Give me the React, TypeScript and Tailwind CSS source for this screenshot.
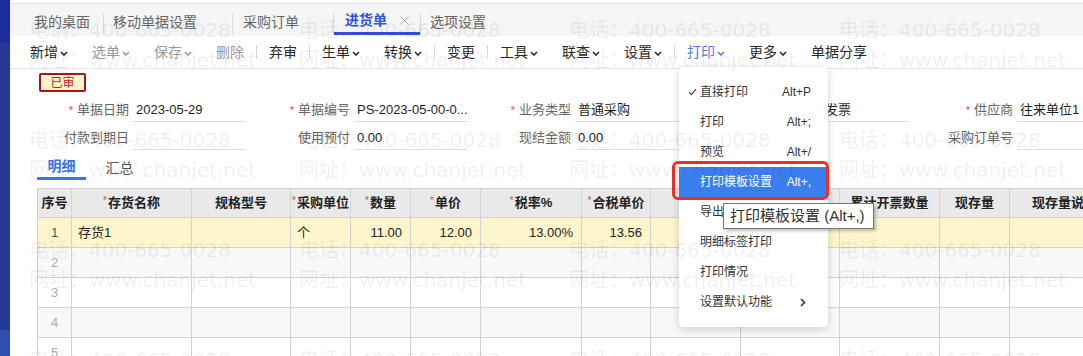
import { Fragment } from 'react';

const tabs = [
  { label: '我的桌面', box: 'w-[93px] pl-[24px]' },
  { label: '移动单据设置', box: 'w-[128px] pl-[9px]' },
  { label: '采购订单', box: 'w-[100px] pl-[10px]' },
  { label: '进货单', box: 'w-[86px] pl-[11px]', active: true },
  { label: '选项设置', box: 'pl-[9px]' },
];

type Tool = { t: string; chev?: boolean; dim?: boolean; blue?: boolean } | 'sep';

const tools: Tool[] = [
  { t: '新增', chev: true },
  { t: '选单', chev: true, dim: true },
  { t: '保存', chev: true, dim: true },
  { t: '删除', dim: true },
  'sep',
  { t: '弃审' },
  'sep',
  { t: '生单', chev: true },
  { t: '转换', chev: true },
  'sep',
  { t: '变更' },
  'sep',
  { t: '工具', chev: true },
  { t: '联查', chev: true },
  { t: '设置', chev: true },
  'sep',
  { t: '打印', chev: true, blue: true },
  { t: '更多', chev: true },
  { t: '单据分享' },
];

type Field = { label?: string; req?: boolean; value?: string; input?: boolean };

const formRows: Field[][] = [
  [
    { label: '单据日期', req: true, value: '2023-05-29', input: true },
    { label: '单据编号', req: true, value: 'PS-2023-05-00-0...', input: true },
    { label: '业务类型', req: true, value: '普通采购', input: true },
    { label: '票据类型', req: true, value: '普通发票', input: true },
    { label: '供应商', req: true, value: '往来单位1', input: true },
  ],
  [
    { label: '付款到期日', input: true },
    { label: '使用预付', value: '0.00', input: true },
    { label: '现结金额', value: '0.00', input: true },
    {},
    { label: '采购订单号', input: true },
  ],
];

const cols = [
  { h: '序号', w: 'w-[34px]' },
  { h: '存货名称', req: true, w: 'w-[120px]' },
  { h: '规格型号', w: 'w-[99px]' },
  { h: '采购单位', req: true, w: 'w-[60px]' },
  { h: '数量', req: true, w: 'w-[60px]' },
  { h: '单价', req: true, w: 'w-[70px]' },
  { h: '税率%', req: true, w: 'w-[101px]' },
  { h: '合税单价', req: true, w: 'w-[69px]' },
  { h: '', w: 'w-[90px]' },
  { h: '', w: 'w-[99px]' },
  { h: '累计开票数量', w: 'w-[100px]' },
  { h: '现存量', w: 'w-[70px]' },
  { h: '现存量说明', w: 'w-[110px]' },
];

const firstRow = ['', '存货1', '', '个', '11.00', '12.00', '13.00%', '13.56', '', '', '', '', ''];
const rightAligned = [4, 5, 6, 7];

const menuItems = [
  { t: '直接打印', k: 'Alt+P', check: true },
  { t: '打印', k: 'Alt+;' },
  { t: '预览', k: 'Alt+/' },
  { t: '打印模板设置', k: 'Alt+,', on: true },
  { t: '导出' },
  { t: '明细标签打印' },
  { t: '打印情况' },
  { t: '设置默认功能', sub: true },
];

function Chevron({ className }: { className: string }) {
  return (
    <svg width="8" height="5" viewBox="0 0 8 5" className={className}>
      <path d="M1 1l3 3 3-3" fill="none" stroke="currentColor" strokeWidth="1.6" />
    </svg>
  );
}

function Star() {
  return <span className="relative -top-[3px] mr-[1px] text-[10px] font-normal text-[#e5484d]">*</span>;
}

function TabBar() {
  return (
    <div className="h-[36px] shrink-0 bg-white pt-[3px]">
      <div className="flex h-[33px] items-start border-t border-[#e2e2e2] bg-[#f5f5f5] text-[14px] text-[#666]">
        {tabs.map((tab, i) => (
          <Fragment key={tab.label}>
            {i > 0 && <div className="mt-[9px] h-[21px] w-px bg-[#dadada]" />}
            <div
              className={`flex h-[31px] items-center pt-[5px] ${tab.box} ${
                tab.active ? 'border-b-[3px] border-[#3050d8] font-bold text-[#2f52d6]' : ''
              }`}
            >
              {tab.label}
              {tab.active && (
                <svg width="9" height="9" viewBox="0 0 9 9" className="ml-[13px] text-[#a6a6a6]">
                  <path d="M0.5 0.5l8 8M8.5 0.5l-8 8" stroke="currentColor" strokeWidth="1" />
                </svg>
              )}
            </div>
          </Fragment>
        ))}
      </div>
    </div>
  );
}

function Toolbar() {
  return (
    <div className="flex h-[33px] shrink-0 items-center border-b border-[#e4e4e4] bg-white pl-[8px] text-[14px] text-[#2a2a2a]">
      {tools.map((tool, i) =>
        tool === 'sep' ? (
          <div key={i} className="h-[14px] w-px bg-[#d9d9d9]" />
        ) : (
          <div
            key={i}
            className={`flex items-center px-[12px] ${tool.dim ? 'text-[#9a9a9a]' : ''} ${
              tool.blue ? 'text-[#4a82e6]' : ''
            }`}
          >
            {tool.t}
            {tool.chev && <Chevron className="ml-[2px] mt-[2px]" />}
          </div>
        )
      )}
    </div>
  );
}

function Form() {
  return (
    <div className="mt-[6px] flex flex-col gap-[4px] pl-[15px] text-[13px]">
      {formRows.map((row, r) => (
        <div key={r} className="flex h-[24px]">
          {row.map((f, i) => (
            <div key={i} className="flex w-[221px] shrink-0">
              <div className="flex w-[108px] items-center justify-end pr-[4px] text-[#666]">
                {f.req && <span className="mr-[4px] text-[11px] text-[#e5484d]">*</span>}
                {f.label}
              </div>
              {f.input && (
                <div className="flex w-[113px] items-center truncate border-b border-[#dddddd] pl-[3px] text-[#1f1f1f]">
                  {f.value}
                </div>
              )}
            </div>
          ))}
        </div>
      ))}
    </div>
  );
}

function DetailTabs() {
  return (
    <div className="ml-[27px] mt-[2px] flex h-[29px] text-[14px]">
      <div className="flex w-[49px] items-center justify-center border-b-[3px] border-[#3578e5] pt-[4px] font-bold text-[#3a72df]">
        明细
      </div>
      <div className="ml-[9px] flex w-[49px] items-center justify-center pt-[4px] text-[#555]">汇总</div>
    </div>
  );
}

function Grid() {
  const rowBg = ['bg-[#fff5cc]', 'bg-[#f8f8f8]', 'bg-white', 'bg-[#f8f8f8]', 'bg-white'];
  return (
    <table className="ml-[27px] mt-[8px] w-[1082px] min-w-[1082px] shrink-0 table-fixed border-collapse text-[13px]">
      <colgroup>
        {cols.map((c, i) => (
          <col key={i} className={c.w} />
        ))}
      </colgroup>
      <thead>
        <tr className="h-[29px] bg-[#e9e9e9]">
          {cols.map((c, i) => (
            <th key={i} className="whitespace-nowrap border border-[#d2d2d2] p-0 text-center font-bold text-[#222]">
              {c.req && <Star />}
              {c.h}
            </th>
          ))}
        </tr>
      </thead>
      <tbody>
        {rowBg.map((bg, r) => (
          <tr key={r} className={`h-[30px] ${bg}`}>
            {cols.map((_, i) => {
              if (i === 0)
                return (
                  <td
                    key={i}
                    className={`border border-[#d2d2d2] text-center ${r === 0 ? 'text-[#2f5f2f]' : 'text-[#ababab]'}`}
                  >
                    {r + 1}
                  </td>
                );
              const v = r === 0 ? firstRow[i] : '';
              return (
                <td
                  key={i}
                  className={`whitespace-nowrap border border-[#d2d2d2] text-[#222] ${
                    rightAligned.includes(i) ? 'pr-[8px] text-right' : 'pl-[6px]'
                  }`}
                >
                  {v}
                </td>
              );
            })}
          </tr>
        ))}
      </tbody>
    </table>
  );
}

function PrintMenu() {
  return (
    <div className="absolute left-[679px] top-[67px] w-[149px] rounded-[4px] bg-white py-[10px] text-[12px] text-[#333] shadow-[0_2px_8px_rgba(0,0,0,0.18)]">
      {menuItems.map((m) => (
        <div
          key={m.t}
          className={`flex h-[30px] items-center pl-[9px] pr-[17px] ${m.on ? 'bg-[#3b7ef0] text-white' : ''}`}
        >
          <span className="flex w-[12px] items-center">
            {m.check && (
              <svg width="9" height="8" viewBox="0 0 9 8">
                <path d="M1 4.2l2.4 2.4L8 1.2" fill="none" stroke="#444" strokeWidth="1.2" />
              </svg>
            )}
          </span>
          <span className="flex-1">{m.t}</span>
          {m.k && <span>{m.k}</span>}
          {m.sub && (
            <svg width="6" height="9" viewBox="0 0 6 9" className="mr-[5px]">
              <path d="M1 1l3.5 3.5L1 8" fill="none" stroke="#333" strokeWidth="1.6" />
            </svg>
          )}
        </div>
      ))}
    </div>
  );
}

function Watermark() {
  const cells = Array.from({ length: 16 });
  return (
    <div className="pointer-events-none absolute inset-0 grid auto-rows-[110px] grid-cols-[repeat(4,270px)] pl-[29px] pt-[15px] font-['DejaVu_Sans','Noto_Sans_CJK_SC',sans-serif] text-[20px] leading-[30px] text-[rgba(0,0,0,0.07)]">
      {cells.map((_, i) => (
        <div key={i} className="whitespace-nowrap">
          <div>电话：400-665-0028</div>
          <div>网址：www.chanjet.net</div>
        </div>
      ))}
    </div>
  );
}

export default function App() {
  return (
    <div className="relative flex h-[356px] w-[1083px] overflow-hidden bg-white font-['Liberation_Sans','Noto_Sans_CJK_SC',sans-serif]">
      <div className="flex w-[10px] shrink-0 flex-col">
        <div className="h-[43px] bg-[#1b2c9e]" />
        <div className="flex-1 bg-[#233993]" />
        <div className="h-[26px] bg-[#2f4db2]" />
      </div>

      <div className="flex min-w-0 flex-1 flex-col">
        <TabBar />
        <Toolbar />
        <div className="ml-[29px] mt-[4px] flex h-[19px] w-[47px] items-center justify-center rounded-[2px] border-2 border-[#a3171a] bg-[#fff5cc] text-[12px] text-[#c8161d]">
          已审
        </div>
        <Form />
        <DetailTabs />
        <Grid />
      </div>

      <PrintMenu />
      <div className="absolute left-[672px] top-[161px] h-[39px] w-[157px] rounded-[6px] border-[3px] border-[#e8312b]" />
      <div className="absolute left-[723px] top-[203px] flex h-[26px] w-[151px] items-center border border-[#767676] bg-white pl-[6px] text-[15px] text-[#333] shadow-[2px_2px_3px_rgba(0,0,0,0.25)]">
        打印模板设置 (Alt+,)
      </div>

      <Watermark />
    </div>
  );
}
